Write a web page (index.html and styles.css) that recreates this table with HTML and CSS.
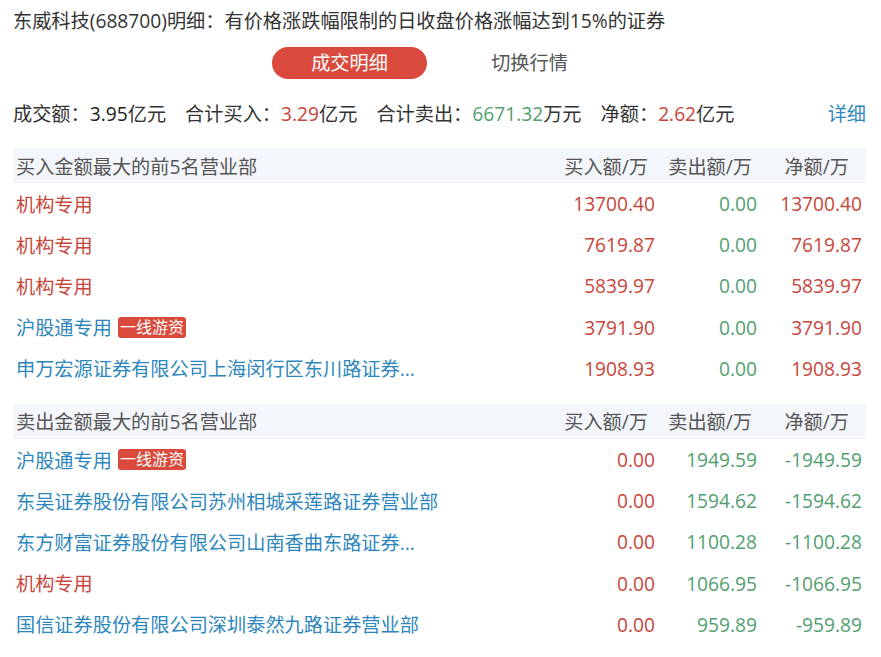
FILE: index.html
```html
<!DOCTYPE html>
<html lang="zh-CN">
<head>
<meta charset="utf-8">
<title>东威科技明细</title>
<link rel="stylesheet" href="styles.css">
</head>
<body>
<div class="page">
  <div class="title">东威科技(688700)明细：有价格涨跌幅限制的日收盘价格涨幅达到15%的证券</div>
  <div class="tabs">
    <div class="tab active">成交明细</div>
    <div class="tab">切换行情</div>
  </div>
  <div class="summary">
    <div class="items">
      <span class="item">成交额：<b class="dark">3.95</b>亿元</span>
      <span class="item">合计买入：<b class="red">3.29</b>亿元</span>
      <span class="item">合计卖出：<b class="green">6671.32</b>万元</span>
      <span class="item">净额：<b class="red">2.62</b>亿元</span>
    </div>
    <a class="more">详细</a>
  </div>

  <div class="section">
    <div class="row head">
      <div class="name">买入金额最大的前5名营业部</div>
      <div class="c1">买入额/万</div>
      <div class="c2">卖出额/万</div>
      <div class="c3">净额/万</div>
    </div>
    <div class="row">
      <div class="name red">机构专用</div>
      <div class="c1 red">13700.40</div>
      <div class="c2 green">0.00</div>
      <div class="c3 red">13700.40</div>
    </div>
    <div class="row">
      <div class="name red">机构专用</div>
      <div class="c1 red">7619.87</div>
      <div class="c2 green">0.00</div>
      <div class="c3 red">7619.87</div>
    </div>
    <div class="row">
      <div class="name red">机构专用</div>
      <div class="c1 red">5839.97</div>
      <div class="c2 green">0.00</div>
      <div class="c3 red">5839.97</div>
    </div>
    <div class="row">
      <div class="name blue">沪股通专用<span class="badge">一线游资</span></div>
      <div class="c1 red">3791.90</div>
      <div class="c2 green">0.00</div>
      <div class="c3 red">3791.90</div>
    </div>
    <div class="row">
      <div class="name blue">申万宏源证券有限公司上海闵行区东川路证券...</div>
      <div class="c1 red">1908.93</div>
      <div class="c2 green">0.00</div>
      <div class="c3 red">1908.93</div>
    </div>
  </div>

  <div class="section second">
    <div class="row head">
      <div class="name">卖出金额最大的前5名营业部</div>
      <div class="c1">买入额/万</div>
      <div class="c2">卖出额/万</div>
      <div class="c3">净额/万</div>
    </div>
    <div class="row">
      <div class="name blue">沪股通专用<span class="badge">一线游资</span></div>
      <div class="c1 red">0.00</div>
      <div class="c2 green">1949.59</div>
      <div class="c3 green">-1949.59</div>
    </div>
    <div class="row">
      <div class="name blue">东吴证券股份有限公司苏州相城采莲路证券营业部</div>
      <div class="c1 red">0.00</div>
      <div class="c2 green">1594.62</div>
      <div class="c3 green">-1594.62</div>
    </div>
    <div class="row">
      <div class="name blue">东方财富证券股份有限公司山南香曲东路证券...</div>
      <div class="c1 red">0.00</div>
      <div class="c2 green">1100.28</div>
      <div class="c3 green">-1100.28</div>
    </div>
    <div class="row">
      <div class="name red">机构专用</div>
      <div class="c1 red">0.00</div>
      <div class="c2 green">1066.95</div>
      <div class="c3 green">-1066.95</div>
    </div>
    <div class="row">
      <div class="name blue">国信证券股份有限公司深圳泰然九路证券营业部</div>
      <div class="c1 red">0.00</div>
      <div class="c2 green">959.89</div>
      <div class="c3 green">-959.89</div>
    </div>
  </div>
</div>
</body>
</html>
```

FILE: styles.css
```css
html, body {
  margin: 0;
  padding: 0;
  background: #ffffff;
}

body {
  font-family: "Open Sans", "Noto Sans CJK SC", sans-serif;
  font-size: 19.2px;
  color: #333333;
}

.page {
  padding: 0 15px 0 13px;
}

.title {
  height: 41px;
  line-height: 41px;
  color: #333333;
  white-space: nowrap;
}

.tabs {
  display: flex;
  justify-content: center;
  gap: 25px;
  margin-top: 6px;
}

.tab {
  width: 155px;
  height: 32px;
  line-height: 32px;
  text-align: center;
  border-radius: 16px;
  color: #555555;
}

.tab.active {
  background: #d94a3c;
  color: #ffffff;
}

.summary {
  display: flex;
  justify-content: space-between;
  align-items: center;
  height: 30px;
  line-height: 30px;
  margin-top: 20px;
}

.items {
  display: flex;
  gap: 19px;
}

.summary b {
  font-weight: 500;
}

.dark { color: #222222; }
.red { color: #c8463c; }
.green { color: #52a06f; }
.blue { color: #2d87bd; }

.more {
  color: #2d87bd;
}

.section {
  margin-top: 19px;
}

.section.second {
  margin-top: 15px;
}

.row {
  display: flex;
  align-items: center;
  height: 41.2px;
  white-space: nowrap;
}

.row.head {
  height: 35px;
  background: #f3f6fa;
  color: #555555;
}

.name {
  flex: 1;
  padding-left: 3px;
  display: flex;
  align-items: center;
}

.c1, .c2, .c3 {
  text-align: right;
}

.c1 { width: 110px; }
.c2 { width: 102px; }
.c3 { width: 105px; padding-right: 4px; }

.head .c1 { width: 103px; padding-right: 7px; }
.head .c2 { width: 97px; padding-right: 5px; }
.head .c3 { width: 92px; padding-right: 17px; }

.badge {
  display: inline-block;
  margin-left: 6px;
  height: 21px;
  line-height: 21px;
  padding: 0 2px;
  border-radius: 3px;
  background: #d94a3c;
  color: #ffffff;
  font-size: 16px;
}
```
